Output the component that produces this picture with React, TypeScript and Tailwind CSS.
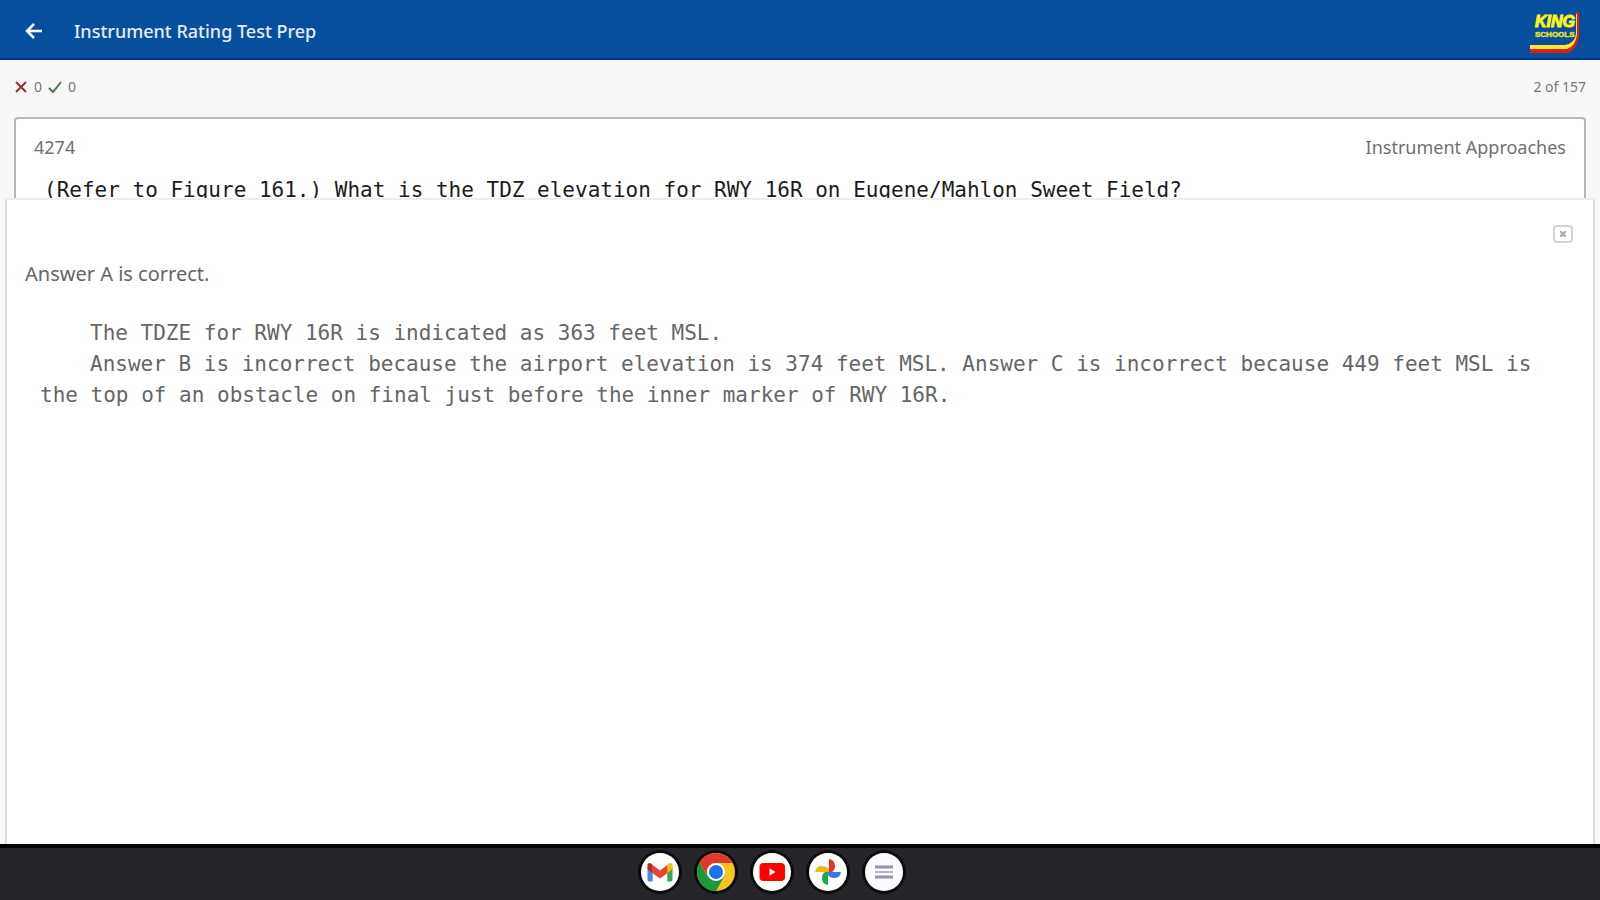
import type { ReactNode } from "react";

const apps: { name: string; icon: ReactNode }[] = [
  {
    name: "Gmail",
    icon: (
      <svg viewBox="0 0 38 38" className="size-full">
        <circle cx="19" cy="19" r="19" fill="#fff" />
        <path d="M6.5 14v12.5q0 2 2 2h3.2V15z" fill="#4285f4" />
        <path d="M31.5 14v12.5q0 2-2 2h-3.2V15z" fill="#34a853" />
        <path d="M26.3 12l1.5-1.6q2-1.200 3.700.900V16l-5.200 4.500z" fill="#fbbc04" />
        <path d="M11.700 12l-1.500-1.600q-2-1.200-3.700.900V16l5.200 4.500z" fill="#c5221f" />
        <path d="M11.700 12l7.300 5.600 7.300-5.600v8.200L19 25.500l-7.300-5.300z" fill="#ea4335" />
      </svg>
    ),
  },
  {
    name: "Chrome",
    icon: (
      <svg viewBox="0 0 38 38" className="size-full">
        <circle cx="19" cy="19" r="19" fill="#fcc31e" />
        <path d="M2.500 9.500A19 19 0 0 0 19 38l8-14.200H11z" fill="#1e963e" />
        <path d="M2.500 9.500A19 19 0 0 1 35.500 10H19a9 9 0 0 0-8 13.500z" fill="#e0382c" />
        <circle cx="19" cy="19" r="9" fill="#fff" />
        <circle cx="19" cy="19" r="7" fill="#1a73e8" />
      </svg>
    ),
  },
  {
    name: "YouTube",
    icon: (
      <svg viewBox="0 0 38 38" className="size-full">
        <circle cx="19" cy="19" r="19" fill="#fff" />
        <rect x="6.500" y="10" width="25.500" height="18" rx="4" fill="#f00" />
        <path d="M16.500 15.200l6 3.800-6 3.800z" fill="#fff" />
      </svg>
    ),
  },
  {
    name: "Photos",
    icon: (
      <svg viewBox="0 0 38 38" className="size-full">
        <circle cx="19" cy="19" r="19" fill="#fff" />
        <path d="M20 19V6q6 1 6 7 0 4-3 6z" fill="#ea3526" />
        <path d="M19 19h13q-1 6-7 6-4 0-6-3z" fill="#3478ee" />
        <path d="M19 19v13q-6-1-6-7 0-4 3-6z" fill="#1ea84a" />
        <path d="M20 19H6q1-6 7-6 4 0 7 3z" fill="#fbb60a" />
      </svg>
    ),
  },
  {
    name: "Test Prep",
    icon: (
      <svg viewBox="0 0 38 38" className="size-full">
        <circle cx="19" cy="19" r="19" fill="#fbfafe" />
        <path d="M10 14h18M10 24h18" stroke="#9492ae" strokeWidth="3" />
        <path d="M10 19h18" stroke="#b4b3c6" strokeWidth="2" />
      </svg>
    ),
  },
];

function KingLogo() {
  return (
    <svg viewBox="0 0 50 46" className="h-[46px] w-[50px]" role="img" aria-label="King Schools">
      <path d="M0 39h35q10-2 11-12V4h3v24q-1 12-11 17H0z" fill="#d8201c" />
      <path d="M0 37h35q10-2 11-11V6h1v20q-1 12-10 15H0z" fill="#ffe92e" />
      <text
        x="5"
        y="19"
        fontFamily="Liberation Sans, sans-serif"
        fontSize="16"
        fontWeight="700"
        fontStyle="italic"
        fill="#fff31a"
        stroke="#fff31a"
        strokeWidth="1"
      >
        KING
      </text>
      <text
        x="5"
        y="29"
        fontFamily="Liberation Sans, sans-serif"
        fontSize="8"
        fontWeight="700"
        fill="#f0e52a"
        stroke="#e5dc35"
        strokeWidth="0.5"
      >
        SCHOOLS
      </text>
    </svg>
  );
}

function Header() {
  return (
    <header className="flex h-[60px] shrink-0 items-center border-b-2 border-[#00308c] bg-[#074f9e] pt-1 pr-5 pl-6 text-white">
      <button type="button" aria-label="Back" className="mr-[30px] flex size-5 items-center justify-center">
        <svg viewBox="0 0 20 20" className="size-5" fill="none" stroke="currentColor" strokeWidth="2.5">
          <path d="M18 10H3M10 3l-7 7 7 7" />
        </svg>
      </button>
      <h1 className="flex-1 text-lg font-medium text-[#e6edf8]">Instrument Rating Test Prep</h1>
      <KingLogo />
    </header>
  );
}

function ScoreBar() {
  return (
    <div className="flex h-[57px] items-center justify-between px-[14px] pb-1 text-sm text-[#777777]">
      <div className="flex items-center gap-1">
        <svg viewBox="0 0 14 12" className="h-3 w-[14px]" fill="none" stroke="#9c2c36" strokeWidth="2">
          <path d="M2 1l10 10M12 1L2 11" />
        </svg>
        <span className="w-3 text-center">0</span>
        <svg viewBox="0 0 14 12" className="h-3 w-[14px]" fill="none" stroke="#4d7554" strokeWidth="2">
          <path d="M1 7l4 4 8-10" />
        </svg>
        <span className="w-3 text-center">0</span>
      </div>
      <span>2 of 157</span>
    </div>
  );
}

function ExplanationSheet() {
  return (
    <section className="absolute inset-x-[5px] top-[138px] bottom-0 border-x-2 border-t-2 border-x-[#dcdcdc] border-t-[#eeeeee] bg-white pr-5 pl-[18px] text-[#666666]">
      <div className="flex h-[60px] items-center justify-end pt-2">
        <button
          type="button"
          aria-label="Close"
          className="flex h-[18px] w-5 items-center justify-center rounded-sm border-2 border-[#d4d4d4]"
        >
          <svg viewBox="0 0 6 6" className="size-[6px]" fill="none" stroke="#a8a8a8" strokeWidth="2">
            <path d="M0 0l6 6M6 0L0 6" />
          </svg>
        </button>
      </div>
      <p className="text-xl">Answer A is correct.</p>
      <div className="mt-[30px] pl-[15px] font-['DejaVu_Sans_Mono',monospace] text-[21px] leading-[31px]">
        <p className="indent-[50px]">The TDZE for RWY 16R is indicated as 363 feet MSL.</p>
        <p className="indent-[50px]">
          Answer B is incorrect because the airport elevation is 374 feet MSL. Answer C is incorrect
          because 449 feet MSL is the top of an obstacle on final just before the inner marker of
          RWY 16R.
        </p>
      </div>
    </section>
  );
}

export default function App() {
  return (
    <div className="flex h-screen flex-col overflow-hidden bg-[#f7f7f7] font-['Noto_Sans',sans-serif]">
      <Header />
      <main className="relative flex-1">
        <ScoreBar />
        <article className="mx-[14px] h-40 rounded border-2 border-[#b8b8b8] bg-white px-4 pt-[14px]">
          <div className="flex justify-between px-[2px] text-lg text-[#707070]">
            <span>4274</span>
            <span>Instrument Approaches</span>
          </div>
          <p className="mt-[14px] pl-3 font-['DejaVu_Sans_Mono',monospace] text-[21px] leading-[31px] text-[#1c1c1c]">
            (Refer to Figure 161.) What is the TDZ elevation for RWY 16R on Eugene/Mahlon Sweet
            Field?
          </p>
        </article>
        <ExplanationSheet />
      </main>
      <footer className="flex h-14 shrink-0 items-center justify-center gap-[18px] bg-[#252428] pr-14 shadow-[inset_0_4px_0_#000000]">
        {apps.map((app) => (
          <button
            key={app.name}
            type="button"
            aria-label={app.name}
            className="size-[38px] rounded-full shadow-[0_0_0_3px_#0c0c0d]"
          >
            {app.icon}
          </button>
        ))}
      </footer>
    </div>
  );
}
